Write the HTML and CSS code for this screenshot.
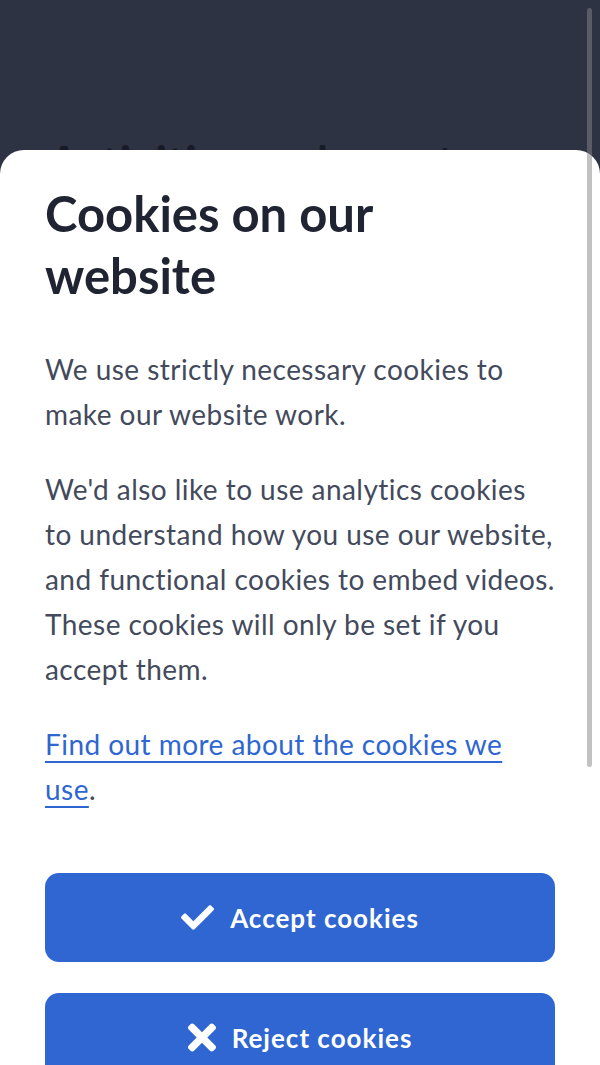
FILE: index.html
```html
<!DOCTYPE html>
<html lang="en">
<head>
  <meta charset="UTF-8">
  <meta name="viewport" content="width=device-width, initial-scale=1.0">
  <title>Cookies on our website</title>
  <link rel="stylesheet" href="styles.css">
</head>
<body>

<!-- Page behind the banner -->
<main class="page">
  <h1 class="page-title">Activities and events</h1>
</main>

<!-- Cookie banner (bottom sheet) -->
<div class="cookie-sheet" role="dialog" aria-labelledby="cookieTitle">
  <h2 id="cookieTitle" class="cookie-title">Cookies on our website</h2>
  <p>We use strictly necessary cookies to make our website work.</p>
  <p>We'd also like to use analytics cookies to understand how you use our website, and functional cookies to embed videos. These cookies will only be set if you accept them.</p>
  <p><a href="#">Find out more about the cookies we use</a>.</p>

  <div class="cookie-actions">
    <button class="cookie-btn">
      <svg class="icon-check" viewBox="0 0 512 512" aria-hidden="true"><path d="M173.9 439.4L7.5 273c-10-10-10-26.2 0-36.2l36.2-36.2c10-10 26.2-10 36.2 0L192 312.7 432.1 72.6c10-10 26.2-10 36.2 0l36.2 36.2c10 10 10 26.2 0 36.2L210.1 439.4c-10 10-26.2 10-36.2 0z"/></svg>
      Accept cookies
    </button>
    <button class="cookie-btn">
      <svg class="icon-times" viewBox="0 0 352 512" aria-hidden="true"><path d="M242.7 256l100.1-100.1c12.3-12.3 12.3-32.2 0-44.5l-22.2-22.2c-12.3-12.3-32.2-12.3-44.5 0L176 189.3 75.9 89.2c-12.3-12.3-32.2-12.3-44.5 0L9.2 111.4c-12.3 12.3-12.3 32.2 0 44.5L109.3 256 9.2 356.1c-12.3 12.3-12.3 32.2 0 44.5l22.2 22.2c12.3 12.3 32.2 12.3 44.5 0L176 322.7l100.1 100.1c12.3 12.3 32.2 12.3 44.5 0l22.2-22.2c12.3-12.3 12.3-32.2 0-44.5L242.7 256z"/></svg>
      Reject cookies
    </button>
  </div>
</div>

<div class="scroll-thumb"></div>

</body>
</html>
```

FILE: styles.css
```css
body {
  font-family: Lato, "Noto Sans", sans-serif;
  background-color: #2e3344;
  margin: 0;
  padding: 0;
  min-height: 1065px;
}

.page {
  padding: 131px 48px 0;
}

.page-title {
  margin: 0;
  font-size: 46px;
  line-height: 62px;
  color: #181b27;
}

/* bottom sheet */
.cookie-sheet {
  position: fixed;
  top: 150px;
  left: 0;
  right: 0;
  bottom: 0;
  overflow: hidden;
  background-color: white;
  border-radius: 24px 24px 0 0;
  padding: 32px 45px 0;
}

.cookie-title {
  max-width: 460px;
  margin: 0 0 41px;
  font-size: 49px;
  line-height: 62px;
  font-weight: 700;
  color: #1f2332;
}

.cookie-sheet p {
  margin: 0 0 30px;
  font-size: 28px;
  line-height: 45px;
  letter-spacing: 0.45px;
  color: #434a5c;
}

.cookie-sheet a {
  color: #2f66d0;
  text-decoration: underline;
  text-underline-offset: 6px;
  text-decoration-thickness: 2px;
}

.cookie-actions {
  display: flex;
  flex-direction: column;
  gap: 31px;
  margin-top: 61px;
}

.cookie-btn {
  display: flex;
  align-items: center;
  justify-content: center;
  gap: 16px;
  height: 89px;
  width: 100%;
  background-color: #3066d2;
  color: white;
  border: none;
  border-radius: 14px;
  font-family: inherit;
  font-size: 26px;
  font-weight: 700;
  letter-spacing: 1px;
  cursor: pointer;
}

.cookie-btn svg {
  fill: white;
  flex-shrink: 0;
}

.icon-check {
  width: 33px;
  height: 33px;
}

.icon-times {
  width: 28px;
  height: 41px;
}

.scroll-thumb {
  position: fixed;
  top: 8px;
  right: 8px;
  width: 5px;
  height: 759px;
  border-radius: 3px;
  background-color: rgba(134, 134, 134, 0.5);
}
```
